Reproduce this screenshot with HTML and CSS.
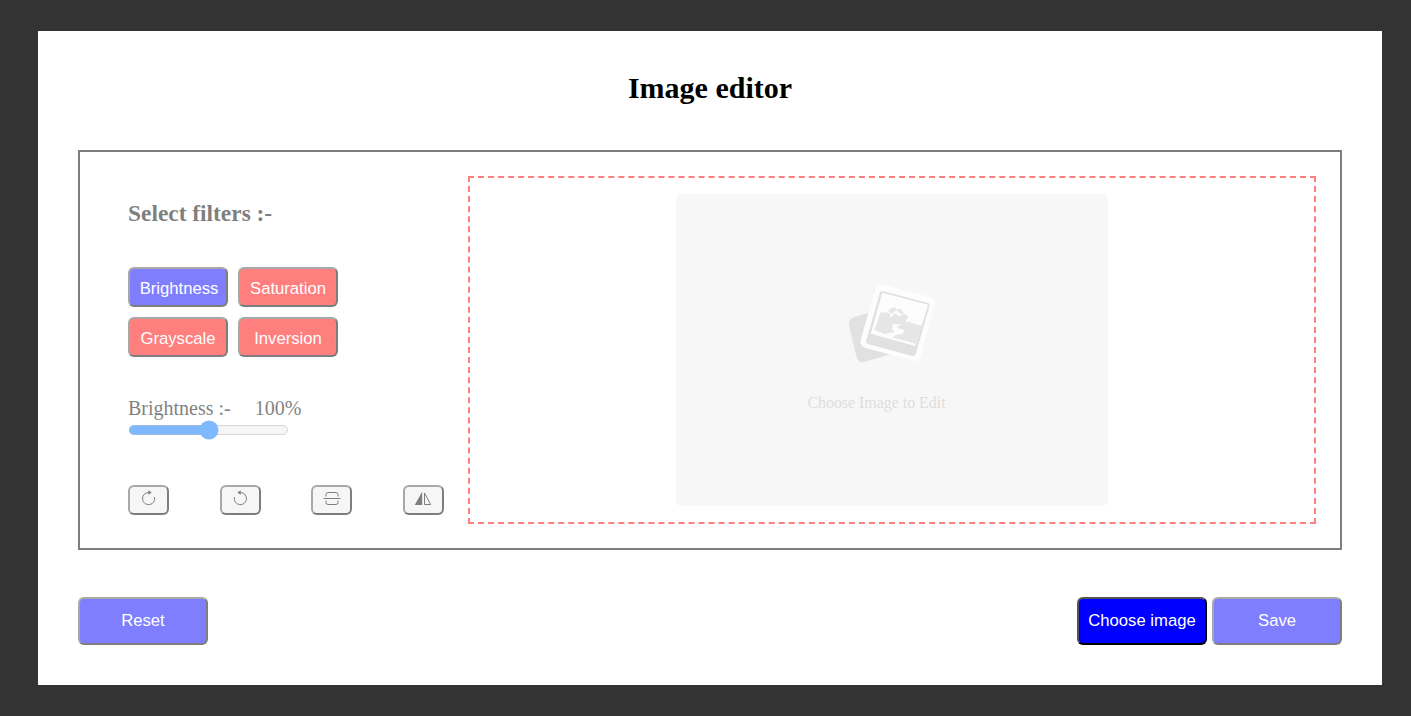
FILE: index.html
```html
<!DOCTYPE html>
<html lang="en">
<head>
<meta charset="utf-8">
<title>Image editor</title>
<link rel="stylesheet" href="styles.css">
</head>
<body>
<main class="container">
  <h2 class="title">Image editor</h2>
  <section class="wrapper disabled">
    <div class="panel">
      <h3 class="heading">Select filters :-</h3>
      <div class="filters">
        <button class="btn filter active">Brightness</button>
        <button class="btn filter">Saturation</button>
        <button class="btn filter">Grayscale</button>
        <button class="btn filter">Inversion</button>
      </div>
      <div class="slider">
        <div class="slider-info"><span>Brightness :-</span><span>100%</span></div>
        <input class="range" type="range" min="0" max="200" value="100">
      </div>
      <div class="rotate">
        <button class="tool" aria-label="Rotate right">
          <svg class="icon" viewBox="0 0 18 18"><path d="M10 3.500H8.500A6.100 6.100 0 1 0 14.500 8"/><path class="solid" d="M8.300 1.200v4.600L11.800 3.500z"/></svg>
        </button>
        <button class="tool" aria-label="Rotate left">
          <svg class="icon" viewBox="0 0 18 18"><path d="M8 3.500H9.500A6.100 6.100 0 1 1 3.500 8"/><path class="solid" d="M9.700 1.200v4.600L6.200 3.500z"/></svg>
        </button>
        <button class="tool" aria-label="Flip vertically">
          <svg class="icon" viewBox="0 0 18 18"><path d="M.5 9.500h17M3 7.500V5.500q0-2 2-2h8q2 0 2 2v2M3 11.500V13.500q0 2 2 2h8q2 0 2-2v-2"/></svg>
        </button>
        <button class="tool" aria-label="Flip horizontally">
          <svg class="icon" viewBox="0 0 18 18"><path class="solid" d="M8.200 2.500V16H.8z"/><path d="M10.500 4V15.500H16.700z"/></svg>
        </button>
      </div>
    </div>
    <div class="preview">
      <div class="placeholder">
        <svg class="photos" viewBox="19.5 21 270 252">
          <path class="back" d="M90 112L42 126Q20 134 26 154L48 246Q53 266 74 260L150 238 66 210z"/>
          <path class="paper" d="M128 29L268 66Q287 72 282 92L242 242Q236 262 217 257L76 219Q55 212 61 193L104 44Q110 25 128 29z"/>
          <path class="frame" d="M127 48L262 84Q268 86 267 92L226 238Q223 245 216 243L82 207Q75 204 77 197L118 54Q120 47 127 48z"/>
          <path class="sky" d="M125 53L263 89 224 213 91 176z"/>
          <path class="hill" d="M121 111L134 113 151 101 162 95 171 103 182 101 190 116 206 126 221 141 232 148 243 152 225 206 160 188 102 165z"/>
          <path class="snow" d="M134 110L148 110 151 126 164 114 176 122 188 118 178 116 167 106 155 117zM196 141L208 117 213 136 221 141 235 149 214 143 206 139z"/>
          <path class="river" d="M158 146L184 149 168 155 174 160 192 166 186 177 166 180 153 188 134 177 162 171 154 161z"/>
          <circle class="dot" cx="169" cy="99" r="4"/>
        </svg>
        <span class="caption">Choose Image to Edit</span>
      </div>
    </div>
  </section>
  <footer class="controls">
    <button class="btn action disabled">Reset</button>
    <div class="row">
      <button class="btn action">Choose image</button>
      <button class="btn action disabled">Save</button>
    </div>
  </footer>
</main>
</body>
</html>
```
FILE: styles.css
```css
* { box-sizing: border-box; }
body {
  margin: 0;
  height: 716px;
  padding: 31px 29px 31px 38px;
  background: #333;
  font: 20px/23px "Liberation Serif", "Times New Roman", serif;
  color: #000;
}
.container {
  height: 654px;
  padding: 40px;
  background: #fff;
}
.title {
  margin: 0 0 45px;
  font-size: 30px;
  line-height: 34px;
  text-align: center;
}
.wrapper {
  display: flex;
  height: 400px;
  padding: 24px;
  border: 2px solid #000;
}
.disabled { opacity: .5; }
.panel {
  width: 364px;
  padding: 24px;
}
.heading {
  margin: 0 0 40px;
  font-size: 23.4px;
  line-height: 27px;
}
.filters {
  display: grid;
  grid-template-columns: 100px 100px;
  gap: 10px;
}
.btn {
  padding: 0;
  border: 2px outset #000;
  border-radius: 6px;
  color: #fff;
  font: 16.667px "Liberation Sans", Arial, sans-serif;
  white-space: nowrap;
}
.filter {
  height: 40px;
  padding-top: 4px;
  background: #f00;
}
.active, .action { background: #00f; }
.active { padding-left: 2px; }
.slider { margin-top: 40px; }
.slider-info {
  display: flex;
  gap: 24px;
}
.range {
  display: block;
  zoom: 1.25;
  width: 129px;
  height: 16px;
  margin: 0;
}
.rotate {
  display: flex;
  justify-content: space-between;
  margin-top: 45px;
}
.tool {
  display: flex;
  justify-content: center;
  width: 41px;
  height: 30px;
  padding: 2px 0 0;
  border: 2px outset #000;
  border-radius: 6px;
  background: #efefef;
}
.icon {
  width: 18px;
  height: 18px;
  fill: none;
  stroke: #000;
  stroke-width: 1;
}
.icon .solid { fill: #000; stroke: none; }
.preview {
  display: flex;
  flex: 1;
  align-items: center;
  justify-content: center;
  border: 2px dashed #f00;
}
.placeholder {
  display: flex;
  flex-direction: column;
  align-items: center;
  width: 432px;
  height: 312px;
  padding: 88px 31px 0 0;
  border-radius: 6px;
  background: #f1f1f1;
}
.photos {
  width: 90px;
  height: 84px;
  margin-left: 30px;
}
.back, .frame { fill: #c4c4c4; }
.paper, .sky, .dot, .snow, .river { fill: #fcfcfc; }
.hill { fill: #cecece; }
.snow { stroke: #fcfcfc; stroke-width: 2; }
.caption {
  margin-top: 25px;
  color: #bdbdbd;
  font-size: 15.900px;
}
.controls {
  display: flex;
  justify-content: space-between;
  margin-top: 47px;
}
.row { display: flex; gap: 5px; }
.action { width: 130px; height: 48px; }
```
